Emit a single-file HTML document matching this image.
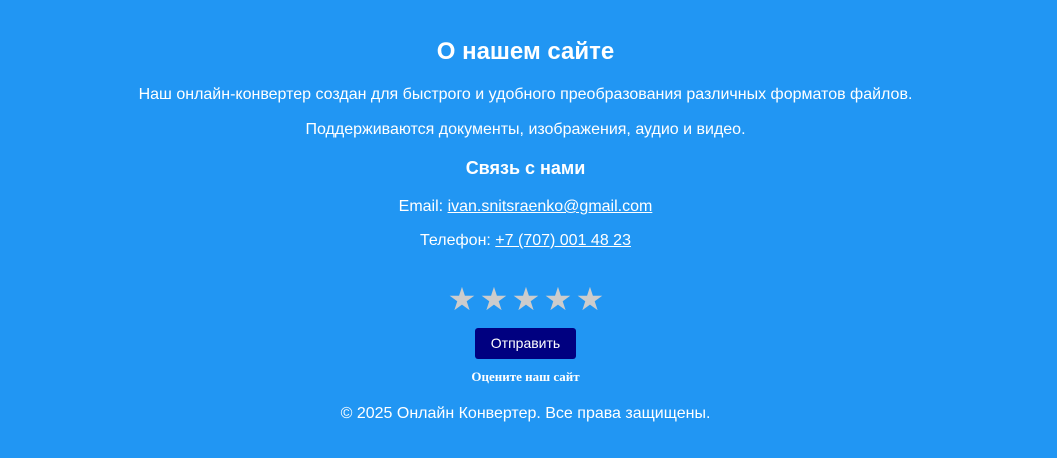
<!DOCTYPE html>
<html><head><meta charset="utf-8"><style>
body{margin:0;width:1057px;height:458px;background:#2196f3;color:#fff;font-family:"Liberation Sans",Arial,sans-serif;text-align:center;overflow:hidden}
.a{position:absolute;left:0;width:1051px;text-align:center;white-space:nowrap}
a{color:#fff}
.s{position:absolute;top:280px;width:32px;margin-left:-16px;text-align:center;font-size:32px;color:#ccc}
</style></head><body>
<div class="a" style="top:38px;font-size:24px;font-weight:bold">О нашем сайте</div>
<div class="a" style="top:86px;font-size:16px">Наш онлайн-конвертер создан для быстрого и удобного преобразования различных форматов файлов.</div>
<div class="a" style="top:121px;font-size:16px">Поддерживаются документы, изображения, аудио и видео.</div>
<div class="a" style="top:158px;font-size:18px;font-weight:bold">Связь с нами</div>
<div class="a" style="top:198px;font-size:16px">Email: <a href="#">ivan.snitsraenko@gmail.com</a></div>
<div class="a" style="top:232px;font-size:16px">Телефон: <a href="#">+7 (707) 001 48 23</a></div>
<span class="s" style="left:462px">★</span><span class="s" style="left:494px">★</span><span class="s" style="left:526px">★</span><span class="s" style="left:558px">★</span><span class="s" style="left:590px">★</span>
<div style="position:absolute;left:475px;top:328px;width:101px;height:31px;background:#000080;border-radius:3px;font-size:14px;line-height:31px">Отправить</div>
<div class="a" style="top:369px;font-size:13px;font-weight:bold;font-family:'Liberation Serif',serif">Оцените наш сайт</div>
<div class="a" style="top:405px;font-size:16px">© 2025 Онлайн Конвертер. Все права защищены.</div>
</body></html>
